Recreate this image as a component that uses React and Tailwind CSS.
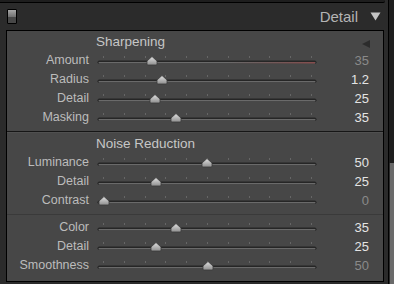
import React from 'react';

const TICKS = Array.from({ length: 11 }, (_, i) => 6 + i * 20.8);

const sections = [
  {
    title: 'Sharpening',
    arrow: true,
    rows: [
      { label: 'Amount', value: '35', pos: 55, dim: true, red: true },
      { label: 'Radius', value: '1.2', pos: 65 },
      { label: 'Detail', value: '25', pos: 58 },
      { label: 'Masking', value: '35', pos: 79 },
    ],
  },
  {
    title: 'Noise Reduction',
    rows: [
      { label: 'Luminance', value: '50', pos: 110 },
      { label: 'Detail', value: '25', pos: 59 },
      { label: 'Contrast', value: '0', pos: 7, dim: true },
    ],
  },
  {
    rows: [
      { label: 'Color', value: '35', pos: 79 },
      { label: 'Detail', value: '25', pos: 59 },
      { label: 'Smoothness', value: '50', pos: 111, dim: true },
    ],
  },
];

function Slider({ pos, red, id }) {
  return (
    <svg width="220" height="19" viewBox="0 0 220 19" className="block">
      <defs>
        <linearGradient id={`thumb-${id}`} x1="0" y1="0" x2="0" y2="1">
          <stop offset="0" stopColor="#e2e2e2" />
          <stop offset="1" stopColor="#8e8e8e" />
        </linearGradient>
        <linearGradient id={`red-${id}`} x1="0" y1="0" x2="1" y2="0">
          <stop offset="0" stopColor="#6e4444" stopOpacity="0" />
          <stop offset="1" stopColor="#8a4a4a" stopOpacity="0.9" />
        </linearGradient>
      </defs>
      {TICKS.map((x, i) => (
        <rect key={i} x={Math.round(x)} y="5" width="1" height="2" fill="#666666" />
      ))}
      <rect x="0.5" y="9.5" width="219" height="3.5" rx="1.75" fill="#262626" />
      <rect x="1.5" y="11" width="217" height="1.5" rx="0.75" fill="#6a6a6a" />
      {red && <rect x="130" y="11" width="88" height="1.5" fill={`url(#red-${id})`} />}
      <path
        d={`M${pos} 5.5 L${pos + 5} 10 L${pos + 5} 13 Q${pos + 5} 14 ${pos + 4} 14 L${pos - 4} 14 Q${pos - 5} 14 ${pos - 5} 13 L${pos - 5} 10 Z`}
        fill={`url(#thumb-${id})`}
        stroke="#3a3a3a"
        strokeWidth="0.8"
      />
    </svg>
  );
}

function Row({ row, id }) {
  return (
    <div className="flex h-[19px] items-center">
      <div className="w-[82px] text-right text-[12.5px] leading-none text-[#bcbcbc]">{row.label}</div>
      <div className="ml-[8px]">
        <Slider pos={row.pos} red={row.red} id={id} />
      </div>
      <div
        className={`w-[52px] text-right text-[13px] leading-none ${row.dim ? 'text-[#8a8a8a]' : 'text-[#e4e4e4]'}`}
      >
        {row.value}
      </div>
    </div>
  );
}

export default function App() {
  return (
    <div
      className="flex w-[394px] h-[284px] bg-[#2b2b2b] overflow-hidden"
      style={{ fontFamily: '"Liberation Sans", Arial, sans-serif' }}
    >
      <div className="flex flex-col w-[388px]">
        {/* strip of the panel above */}
        <div className="h-[3px] w-[385px] bg-[#1e1e1e] border-b border-black rounded-br-[2px]" />

        {/* panel header */}
        <div className="flex items-center h-[27px]">
          <div className="ml-[7px] w-[10px] h-[15px] rounded-[1px] border border-black flex flex-col overflow-hidden">
            <div className="h-1/2 bg-gradient-to-b from-[#a8a8a8] to-[#707070]" />
            <div className="h-1/2 bg-[#474747]" />
          </div>
          <div className="ml-auto text-[15px] leading-none text-[#b4b4b4]">Detail</div>
          <svg width="11" height="9" viewBox="0 0 11 9" className="ml-[12px] mr-[7px]">
            <path d="M0.5 0.5 L10.5 0.5 L5.5 8.5 Z" fill="#c4c4c4" />
          </svg>
        </div>

        {/* panel body */}
        <div className="ml-[6px] w-[378px] h-[252px] border border-black bg-[#474747] flex flex-col">
          {/* Sharpening */}
          <div className="flex items-center h-[20px] pt-[2px]">
            <div className="ml-[89px] text-[13.5px] leading-none text-[#c6c6c6]">Sharpening</div>
            <svg width="8" height="8" viewBox="0 0 8 8" className="ml-auto mr-[13px] mt-[4px]">
              <path d="M0 4 L8 0 L8 8 Z" fill="#2c2c2c" />
            </svg>
          </div>
          {sections[0].rows.map((r, i) => (
            <Row key={i} row={r} id={`a${i}`} />
          ))}
          <div className="mt-[4px] h-px bg-[#161616]" />
          <div className="h-px bg-[#505050]" />

          {/* Noise Reduction */}
          <div className="flex items-center h-[20px] pt-[1px]">
            <div className="ml-[89px] text-[13.5px] leading-none text-[#c6c6c6]">Noise Reduction</div>
          </div>
          {sections[1].rows.map((r, i) => (
            <Row key={i} row={r} id={`b${i}`} />
          ))}
          <div className="mt-[4px] h-px bg-[#3a3a3a]" />
          <div className="h-[3px]" />
          {sections[2].rows.map((r, i) => (
            <Row key={i} row={r} id={`c${i}`} />
          ))}
        </div>
      </div>

      {/* scrollbar */}
      <div className="flex flex-col w-[6px] border-l border-black">
        <div className="h-[163px] bg-[#1e1e1e]" />
        <div className="flex-1 bg-[#6a6a6a] ml-[1px]" />
      </div>
    </div>
  );
}
